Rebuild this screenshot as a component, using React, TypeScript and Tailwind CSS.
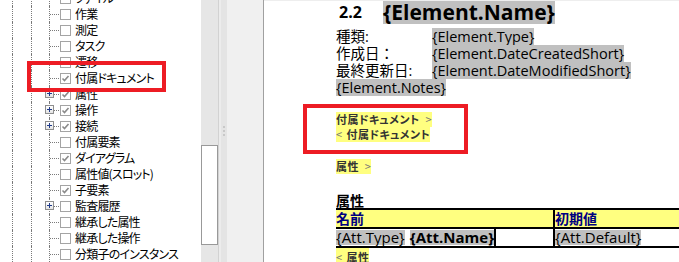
import type { ReactNode } from "react";

const ui = "font-['Noto_Sans_CJK_JP',sans-serif] [font-feature-settings:'palt']";
const doc = "font-['Open_Sans','Noto_Sans_CJK_JP',sans-serif]";

type Row = { label: string; checked?: boolean; expand?: boolean };

const rows: Row[] = [
  { label: "ファイル" },
  { label: "作業" },
  { label: "測定" },
  { label: "タスク" },
  { label: "遷移" },
  { label: "付属ドキュメント", checked: true },
  { label: "属性", checked: true, expand: true },
  { label: "操作", checked: true, expand: true },
  { label: "接続", checked: true, expand: true },
  { label: "付属要素" },
  { label: "ダイアグラム", checked: true },
  { label: "属性値(スロット)" },
  { label: "子要素", checked: true },
  { label: "監査履歴", expand: true },
  { label: "継承した属性" },
  { label: "継承した操作" },
  { label: "分類子のインスタンス" },
];

function Check({ checked }: { checked?: boolean }) {
  return (
    <span className="flex size-[11px] shrink-0 items-center justify-center border border-[#a4a4a4] bg-white">
      {checked ? (
        <svg width="9" height="9" viewBox="0 0 9 9">
          <path d="M1.5 4.5 L3.5 6.5 L7.5 2" fill="none" stroke="#8a8a8a" strokeWidth="1.6" />
        </svg>
      ) : null}
    </span>
  );
}

function Plus() {
  return (
    <span className="absolute left-[-5px] top-[3px] flex size-[9px] items-center justify-center border border-[#8e8e8e] bg-gradient-to-b from-white to-[#e4e4e4]">
      <svg width="7" height="7" viewBox="0 0 7 7">
        <path d="M1 3.5 H6 M3.5 1 V6" stroke="#1f3a8a" strokeWidth="1" />
      </svg>
    </span>
  );
}

function TreeRow({ label, checked, expand }: Row) {
  return (
    <div className="flex h-4 items-stretch">
      <span className="ml-3 w-[19px] border-l border-dotted border-[#7a7a7a]" />
      <span className="w-[18px] border-l border-dotted border-[#7a7a7a]" />
      <span className="relative w-[11px] border-l border-dotted border-[#7a7a7a]">
        <span className="absolute left-0 top-[8px] w-[9px] border-t border-dotted border-[#7a7a7a]" />
        {expand ? <Plus /> : null}
      </span>
      <span className="flex items-center">
        <Check checked={checked} />
      </span>
      <span className="ml-[4px] flex items-center whitespace-nowrap text-[12px] leading-4 tracking-[-0.8px] text-black">
        {label}
      </span>
    </div>
  );
}

function Hl({ children, className = "" }: { children: ReactNode; className?: string }) {
  return <span className={`inline-block bg-[#c0c0c0] ${className}`}>{children}</span>;
}

function Field({ label, children }: { label: string; children: ReactNode }) {
  return (
    <div className="flex h-[17px] items-center">
      <span className="w-[96px] shrink-0">{label}</span>
      {children}
    </div>
  );
}

function Marker({ children }: { children: ReactNode }) {
  return (
    <div className={`${ui} flex h-[15px] w-fit items-center bg-[#ffff80] text-[11px] font-bold tracking-[0.4px] text-[#333]`}>
      {children}
    </div>
  );
}

function Gt() {
  return <span className="ml-[6px] font-normal text-[#777]">&gt;</span>;
}

function Lt() {
  return <span className="mr-[4px] font-normal text-[#777]">&lt;</span>;
}

export default function App() {
  return (
    <div className="relative flex h-[262px] w-[679px] overflow-hidden bg-white">
      {/* tree */}
      <div className={`${ui} w-[201px] shrink-0 overflow-hidden bg-white`}>
        <div className="-mt-[10px]">
          {rows.map((r) => (
            <TreeRow key={r.label} {...r} />
          ))}
        </div>
      </div>

      {/* scrollbar */}
      <div className="flex w-[17px] shrink-0 flex-col bg-[#e6e6e6] pt-[145px]">
        <div className="h-[100px] border border-[#999] bg-white" />
      </div>
      <div className="w-px shrink-0 bg-[#d2d2d2]" />
      <div className="w-[2px] shrink-0 bg-[#ececec]" />

      {/* splitter */}
      <div className="flex w-[6px] shrink-0 flex-col items-center justify-center gap-[2px] bg-[#e4e4e4]">
        <span className="size-[2px] bg-[#c8c8c8]" />
        <span className="size-[2px] bg-[#c8c8c8]" />
        <span className="size-[2px] bg-[#c8c8c8]" />
      </div>
      <div className="w-[36px] shrink-0 bg-[#f0f0f0]" />
      <div className="w-px shrink-0 bg-[#a0a0a0]" />

      {/* document */}
      <div className={`${doc} flex-1 overflow-hidden border-t border-[#eeeeee] pl-[72px] text-black`}>
        <div className="-mt-px flex h-6 items-center">
          <span className="ml-[3px] w-[44px] text-[16px] font-bold">2.2</span>
          <Hl className="text-[21px] font-bold leading-6">{"{Element.Name}"}</Hl>
        </div>

        <div className="mt-1 text-[14.5px] leading-[17px]">
          <Field label="種類:"><Hl>{"{Element.Type}"}</Hl></Field>
          <Field label="作成日："><Hl>{"{Element.DateCreatedShort}"}</Hl></Field>
          <Field label="最終更新日:"><Hl>{"{Element.DateModifiedShort}"}</Hl></Field>
          <div className="flex h-[17px] items-center">
            <Hl>{"{Element.Notes}"}</Hl>
          </div>
        </div>

        <div className="mt-4">
          <Marker>付属ドキュメント<Gt /></Marker>
          <Marker><Lt />付属ドキュメント</Marker>
        </div>

        <div className="mt-[17px]">
          <Marker>属性<Gt /></Marker>
        </div>

        <div className={`${ui} mt-[19px] h-[15px] text-[14px] font-bold leading-[15px]`}>属性</div>

        <div className="w-[420px] border-y-2 border-black text-[15px] leading-[15px]">
          <div className="flex border-b-2 border-black bg-[#ffff80] font-bold text-[#000080]">
            <div className={`${ui} w-[217px] py-px text-[14px]`}>名前</div>
            <div className={`${ui} flex-1 border-l-2 border-black py-px text-[14px]`}>初期値</div>
          </div>
          <div className="flex">
            <div className="flex w-[217px] items-center">
              <Hl>{"{Att.Type}"}</Hl>
              <Hl className="ml-[5px] font-bold">{"{Att.Name}"}</Hl>
              <span className="h-full w-[2px] bg-black" />
            </div>
            <div className="flex-1 border-l-2 border-black py-px">
              <Hl>{"{Att.Default}"}</Hl>
            </div>
          </div>
        </div>

        <div className="flex h-[18px] w-fit items-center bg-[#ffff80]">
          <Marker><Lt />属性</Marker>
        </div>
      </div>

      {/* annotation boxes */}
      <div className="absolute left-[27px] top-[61px] h-[31px] w-[139px] border-4 border-[#ed1c24]" />
      <div className="absolute left-[303px] top-[104px] h-[50px] w-[165px] border-[4px] border-[#ed1c24]" />
    </div>
  );
}
